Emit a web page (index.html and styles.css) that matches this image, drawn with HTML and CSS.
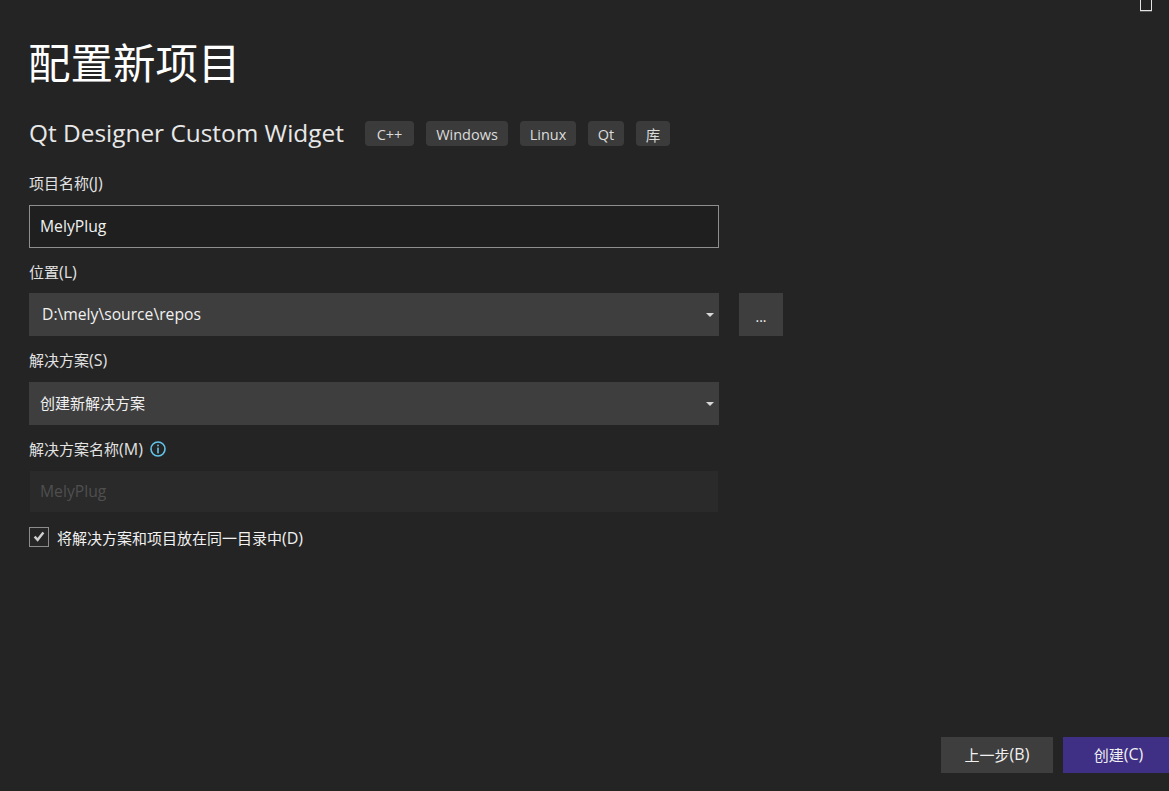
FILE: index.html
```html
<!DOCTYPE html>
<html lang="zh-CN">
<head>
<meta charset="utf-8">
<title>配置新项目</title>
<link rel="stylesheet" href="styles.css">
</head>
<body>
<div class="page">
  <div class="topbar"><span class="restore"></span></div>
  <main class="content">
    <h1 class="title">配置新项目</h1>
    <div class="subhead">
      <h2 class="template">Qt Designer Custom Widget</h2>
      <ul class="chips">
        <li class="chip chip-cpp">C++</li>
        <li class="chip chip-win">Windows</li>
        <li class="chip chip-linux">Linux</li>
        <li class="chip chip-qt">Qt</li>
        <li class="chip chip-lib">库</li>
      </ul>
    </div>
    <div class="label label-first"><span>项目名称<span class="key">(J)</span></span></div>
    <div class="field field-input">MelyPlug</div>
    <div class="label label-second"><span>位置<span class="key">(L)</span></span></div>
    <div class="row">
      <div class="field field-select field-path">D:\mely\source\repos<span class="caret"></span></div>
      <div class="browse">...</div>
    </div>
    <div class="label label-third"><span>解决方案<span class="key">(S)</span></span></div>
    <div class="field field-select field-solution">创建新解决方案<span class="caret"></span></div>
    <div class="label label-fourth"><span>解决方案名称<span class="key">(M)</span></span>
      <svg class="info" viewBox="0 0 16 16" width="16" height="16" aria-hidden="true">
        <circle cx="8" cy="8" r="7" fill="none" stroke="#62c4ea" stroke-width="1.6"/>
        <rect x="7.2" y="3.6" width="1.6" height="1.7" fill="#62c4ea"/>
        <rect x="7.2" y="6.6" width="1.6" height="5.8" fill="#62c4ea"/>
      </svg>
    </div>
    <div class="field field-disabled">MelyPlug</div>
    <div class="check-row">
      <span class="checkbox">
        <svg viewBox="0 0 18 18" width="18" height="18" aria-hidden="true"><path d="M4.6 8.6 L7.6 11.8 L13.4 4.4" fill="none" stroke="#cfcfcf" stroke-width="2.4"/></svg>
      </span>
      <span class="check-label">将解决方案和项目放在同一目录中<span class="key">(D)</span></span>
    </div>
  </main>
  <footer class="footer">
    <div class="btn btn-back">上一步<span class="key">(B)</span></div>
    <div class="btn btn-create">创建<span class="key">(C)</span></div>
  </footer>
</div>
</body>
</html>
```
FILE: styles.css
```css
* { box-sizing: border-box; }
html, body { margin: 0; padding: 0; height: 100%; }
body {
  background: #242424;
  color: #f1f1f1;
  font-family: "Open Sans", "Noto Sans CJK SC", sans-serif;
  font-size: 15px;
  overflow: hidden;
}
.page { height: 791px; display: flex; flex-direction: column; }
.topbar { display: flex; justify-content: flex-end; height: 11px; padding-right: 17px; }
.restore {
  width: 12px; height: 11px;
  border: 1px solid #e4e4e4; border-top: 0;
  box-shadow: 0 1px 0 #555;
}
.content { padding-left: 29px; flex: 1; display: flex; flex-direction: column; align-items: flex-start; }
.title {
  margin: 22px 0 0 -1px;
  font-size: 42.5px; line-height: 60px; font-weight: 400; color: #fff;
}
.subhead { display: flex; align-items: center; margin-top: 28px; height: 25px; }
.template { margin: 0 0 2px; font-size: 24.4px; font-weight: 400; line-height: 25px; color: #e8e8e8; width: 336px; white-space: nowrap; }
.chips { list-style: none; margin: 0; padding: 0; display: flex; gap: 12px; }
.chip {
  height: 25px; border-radius: 4px; background: #3b3b3b; color: #dcdcdc; padding-top: 1px;
  display: flex; align-items: center; justify-content: center; font-size: 14.5px;
}
.chip-cpp { width: 49px; }
.chip-win { width: 82px; }
.chip-linux { width: 56px; }
.chip-qt { width: 36px; }
.chip-lib { width: 34px; }
.key { font-size: 16px; }
.label { font-size: 15px; line-height: 20px; color: #e2e2e2; height: 20px; display: flex; align-items: center; gap: 7px; }
.label-first { margin-top: 27px; }
.label-second { margin-top: 14px; }
.label-third { margin-top: 14px; }
.label-fourth { margin-top: 14px; }
.field {
  width: 690px; height: 43px; display: flex; align-items: center; font-size: 15.7px;
  position: relative;
}
.field-input { margin-top: 12px; background: #1f1f1f; border: 1px solid #8e8e8e; padding: 0 0 2px 10px; color: #f1f1f1; }
.field-select { background: #3e3e3e; padding: 0 0 2px 11px; color: #f1f1f1; font-size: 15px; }
.field-solution { margin-top: 12px; padding-bottom: 3px; }
.field-path { padding-left: 13px; font-size: 15.7px; }
.row { display: flex; gap: 20px; margin-top: 11px; }
.browse {
  width: 44px; height: 43px; background: #3e3e3e; color: #f1f1f1;
  display: flex; align-items: center; justify-content: center; font-size: 14px; padding-top: 3px;
}
.caret {
  position: absolute; right: 5px; top: 20px;
  border-style: solid; border-width: 4px 4px 0; border-color: #d8d8d8 transparent transparent;
}
.field-disabled {
  width: 688px; height: 41px; margin: 12px 0 0 1px; background: #2a2a2a; color: #4f4f4f; padding: 0 0 2px 10px;
}
.check-row { display: flex; align-items: center; margin-top: 15px; height: 20px; }
.checkbox {
  width: 20px; height: 20px; border: 1px solid #8c8c8c; background: #262626;
  display: flex; align-items: center; justify-content: center;
}
.check-label { margin-left: 8px; font-size: 15px; color: #f1f1f1; padding-top: 2px; }
.footer { display: flex; justify-content: flex-end; gap: 10px; padding-bottom: 18px; }
.btn { height: 36px; display: flex; align-items: center; justify-content: center; font-size: 15px; color: #f1f1f1; padding-bottom: 2px; }
.btn-back { width: 112px; background: #3e3e3e; }
.btn-create { width: 106px; background: #3f3085; padding-left: 5px; }
```
